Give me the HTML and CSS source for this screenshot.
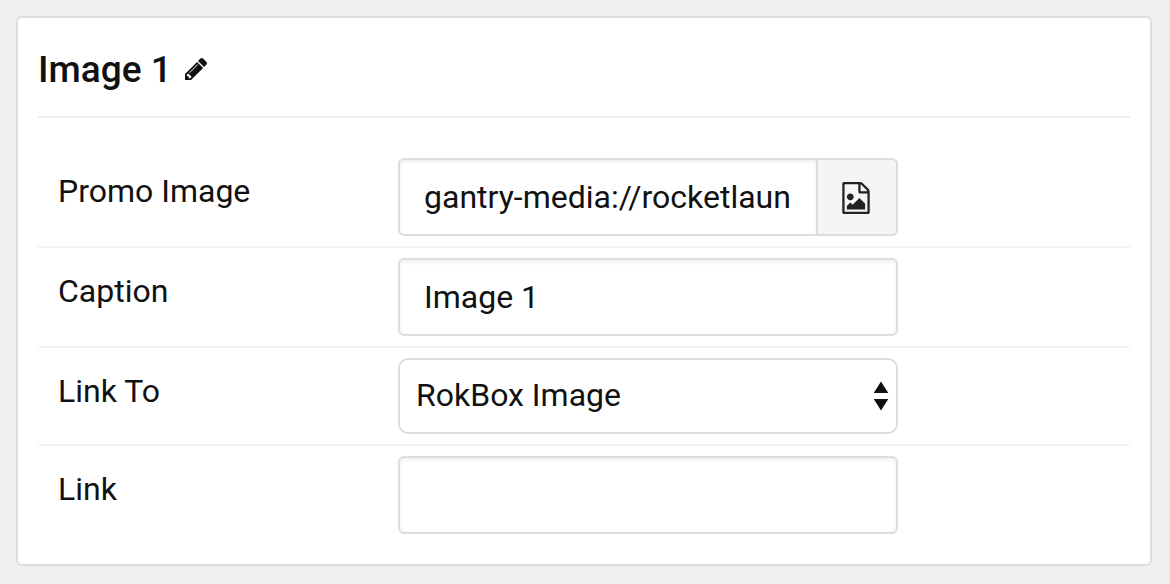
FILE: index.html
```
<!DOCTYPE html>
<html lang="en">
<head>
<meta charset="utf-8">
<title>Image 1</title>
<link rel="stylesheet" href="styles.css">
</head>
<body>
<main class="card">
  <header class="card-header">
    <h1 class="card-title">Image 1</h1>
    <button class="edit" type="button" aria-label="Edit title">
      <svg viewBox="128 149 1515 1515" width="22" height="22"><path fill="currentColor" d="M491 1536l91-91-235-235-91 91v107h128v128h107zm523-928q0-22-22-22-10 0-17 7l-542 542q-7 7-7 17 0 22 22 22 10 0 17-7l542-542q7-7 7-17zm-54-192l416 416-832 832h-416v-416zm683 96q0 53-37 90l-166 166-416-416 166-165q36-38 90-38 53 0 91 38l235 234q37 39 37 91z"/></svg>
    </button>
  </header>
  <form class="fields">
    <div class="field">
      <label class="label" for="promo">Promo Image</label>
      <div class="group">
        <input class="input" id="promo" type="text" value="gantry-media://rocketlaunch">
        <button class="picker" type="button" aria-label="Choose image">
          <svg viewBox="128 0 1536 1792" width="28" height="32"><path fill="currentColor" d="M1596 380q28 28 48 76t20 88v1152q0 40-28 68t-68 28h-1344q-40 0-68-28t-28-68v-1600q0-40 28-68t68-28h896q40 0 88 20t76 48zm-444-244v376h376q-10-29-22-41l-313-313q-12-12-41-22zm384 1528v-1024h-416q-40 0-68-28t-28-68v-416h-768v1536h1280zm-128-448v320h-1024v-192l192-192 128 128 384-384zm-832-192q-80 0-136-56t-56-136 56-136 136-56 136 56 56 136-56 136-136 56z"/></svg>
        </button>
      </div>
    </div>
    <div class="field">
      <label class="label" for="caption">Caption</label>
      <div class="group"><input class="input" id="caption" type="text" value="Image 1"></div>
    </div>
    <div class="field">
      <label class="label" for="linkto">Link To</label>
      <div class="group">
        <select class="select" id="linkto"><option>RokBox Image</option></select>
        <svg class="arrows" viewBox="0 0 16 30" width="16" height="30"><path fill="currentColor" d="M8 .5l7.300 11.500H.7zM8 29.500l7.300-11.500H.7z"/></svg>
      </div>
    </div>
    <div class="field">
      <label class="label" for="link">Link</label>
      <div class="group"><input class="input" id="link" type="text"></div>
    </div>
  </form>
</main>
</body>
</html>
```
FILE: styles.css
```
* { box-sizing: border-box; }
body {
  margin: 0;
  padding: 16px 18px 18px 16px;
  background: #efefef;
  color: #111;
  font-family: Roboto, sans-serif;
  font-size: 32px;
}
.card {
  padding: 20px;
  background: #fff;
  border: 2px solid #ddd;
  border-radius: 6px;
}
.card-header {
  display: flex;
  align-items: center;
  gap: 13px;
  height: 80px;
  padding-bottom: 16px;
  border-bottom: 2px solid #eee;
}
.card-title {
  margin: 0;
  padding-top: 2px;
  font-size: 37px;
  line-height: 48px;
  font-weight: 500;
}
.edit {
  display: flex;
  padding: 0;
  border: 0;
  background: none;
  color: inherit;
}
.fields { padding-top: 30px; }
.field {
  display: grid;
  grid-template-columns: 340px 500px;
  align-items: start;
  padding: 10px 0 10px 20px;
  border-bottom: 2px solid #f3f3f3;
}
.field:last-child { border-bottom: 0; }
.label {
  padding-top: 14px;
  line-height: 38px;
}
.group {
  position: relative;
  display: flex;
}
.input, .select {
  flex: 1;
  min-width: 0;
  height: 78px;
  margin: 0;
  padding: 0 24px;
  border: 2px solid #ddd;
  border-radius: 6px;
  background: #fff;
  box-shadow: inset 0 2px 4px #eee;
  color: inherit;
  font: inherit;
}
.select {
  height: 76px;
  padding: 0 16px 2px;
  border-radius: 10px;
  box-shadow: none;
  appearance: none;
}
.arrows {
  position: absolute;
  right: 9px;
  top: 23px;
  pointer-events: none;
}
.input:not(:last-child) { border-radius: 6px 0 0 6px; }
.picker {
  display: flex;
  align-items: center;
  justify-content: center;
  width: 80px;
  padding: 2px 2px 0 0;
  border: 2px solid #ddd;
  border-left: 0;
  border-radius: 0 6px 6px 0;
  background: #f5f5f5;
  color: #222;
}
```
